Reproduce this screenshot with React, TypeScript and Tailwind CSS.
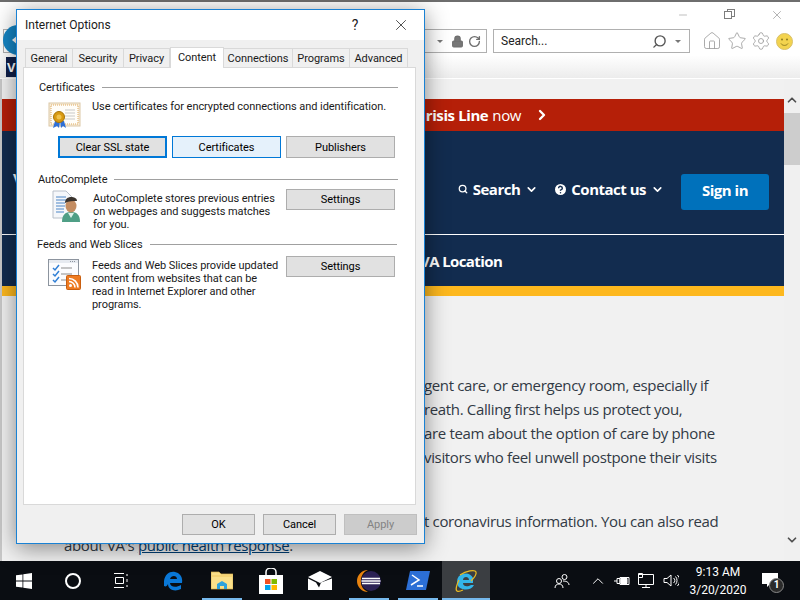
import React from "react";
import { ChevronDown, ChevronRight, ChevronUp, Search, CircleHelp, Home, Star, Settings, Lock, RotateCw, X, Minus } from "lucide-react";

const tabs = [
  { label: "General", w: "w-[48px]" },
  { label: "Security", w: "w-[52px]" },
  { label: "Privacy", w: "w-[47px]" },
  { label: "Content", w: "w-[54px]", active: true },
  { label: "Connections", w: "w-[70px]" },
  { label: "Programs", w: "w-[58px]" },
  { label: "Advanced", w: "w-[59px]" },
];

const bodyLines = [
  { text: "gent care, or emergency room, especially if", pad: "pl-[422px]", mt: "mt-[0px]" },
  { text: "reath. Calling first helps us protect you,", pad: "pl-[422px]", mt: "mt-[0px]" },
  { text: "are team about the option of care by phone", pad: "pl-[422px]", mt: "mt-[0px]" },
  { text: "visitors who feel unwell postpone their visits", pad: "pl-[422px]", mt: "mt-[0px]" },
  { text: "t coronavirus information. You can also read", pad: "pl-[422px]", mt: "mt-[40px]" },
];

function CertIcon() {
  return (
    <svg width="33" height="27" viewBox="0 0 33 27">
      <rect x="1" y="1" width="31" height="23" fill="#f7ecd8" stroke="#dcc7a6" />
      <rect x="3" y="3" width="27" height="19" fill="#fffdf8" stroke="#e0a95c" strokeDasharray="1 1" />
      <path d="M17 8h10M17 11h10M17 14h10M17 17h10" stroke="#c9c9c9" />
      <path d="M7 19l-2 7 4-2 2 2 1-7zM12 19l1 7 2-2 3 2-2-7z" fill="#2f6fd6" />
      <circle cx="11" cy="15" r="5.5" fill="#d99a12" stroke="#a87408" />
      <circle cx="11" cy="15" r="2.5" fill="#f0c24c" />
    </svg>
  );
}

function AutoCompleteIcon() {
  return (
    <svg width="29" height="33" viewBox="0 0 29 33">
      <path d="M1 1h13l6 6v21H1z" fill="#f5f7fa" stroke="#b9c0c9" />
      <path d="M4 7h10M4 10h11M4 13h9M4 16h9M4 19h8M4 22h8" stroke="#4d86c7" />
      <path d="M10 32c0-7 3-10 9-10s9 3 9 10z" fill="#4f9f86" />
      <path d="M16 23l3 5 3-5z" fill="#dff1ea" />
      <ellipse cx="19" cy="16" rx="5.5" ry="6.5" fill="#c48d62" />
      <path d="M13 13c0-4 3-6 6-6s6 1 6 4c-4 0-8 0-12 2z" fill="#3a332d" />
    </svg>
  );
}

function FeedsIcon() {
  return (
    <svg width="33" height="31" viewBox="0 0 33 31">
      <rect x="0.5" y="0.5" width="30" height="26" fill="#fbfcfe" stroke="#8c949e" />
      <path d="M1 1h29v3H1z" fill="#e6eaf0" />
      <path d="M22 2.5h6" stroke="#8c949e" strokeDasharray="1 1" />
      <path d="M5 9l2 2 4-5M5 15l2 2 4-5M5 21l2 2 4-5" fill="none" stroke="#2f7fd6" strokeWidth="1.5" />
      <path d="M13 9h11M13 15h11M13 21h7" stroke="#8d8d8d" />
      <rect x="18.5" y="16.5" width="14" height="14" rx="1" fill="#ee7b22" stroke="#c95f10" />
      <circle cx="22.5" cy="26.5" r="1.5" fill="#fff" />
      <path d="M21 22.5a6 6 0 0 1 6 6M21 19.5a9 9 0 0 1 9 9" fill="none" stroke="#fff" strokeWidth="1.6" />
    </svg>
  );
}

function DlgButton({ label, className = "", disabled = false }: { label: string; className?: string; disabled?: boolean }) {
  return (
    <button
      className={`flex items-center justify-center border ${disabled ? "border-[#bfbfbf] bg-[#cccccc] text-[#838383]" : "border-[#adadad] bg-[#e1e1e1] text-black"} ${className}`}
    >
      {label}
    </button>
  );
}

function Legend({ label, className = "" }: { label: string; className?: string }) {
  return (
    <div className={`flex items-center h-[16px] ${className}`}>
      <span>{label}</span>
      <div className="flex-1 h-px bg-[#a0a0a0] ml-[7px]" />
    </div>
  );
}

function InternetOptions() {
  return (
    <div className="absolute left-[16px] top-[9px] w-[409px] h-[535px] flex flex-col border border-[#1a82d4] bg-[#f0f0f0] text-[11px] leading-[13px] tracking-[-0.06px] text-[#1a1a1a] font-['Roboto',sans-serif] shadow-[0_4px_22px_rgba(0,0,0,0.45)]">
      <div className="h-[30px] bg-white flex items-center pl-[8px] shrink-0">
        <span className="flex-1 text-[12px] tracking-normal">Internet Options</span>
        <span className="w-[12px] text-[14px] mr-[31px] text-center">?</span>
        <X className="w-[18px] h-[18px] mr-[14px]" strokeWidth={1} />
      </div>
      <div className="flex items-end h-[27px] pl-[8px] shrink-0">
        {tabs.map((t) =>
          t.active ? (
            <div key={t.label} className={`${t.w} h-[21px] -mb-px z-10 flex items-center justify-center bg-white border border-b-0 border-[#d9d9d9] pb-[2px]`}>
              {t.label}
            </div>
          ) : (
            <div key={t.label} className={`${t.w} h-[19px] pt-[1px] flex items-center justify-center bg-[#f0f0f0] border border-b-0 border-[#d9d9d9] -ml-px first:ml-0`}>
              {t.label}
            </div>
          ),
        )}
      </div>
      <div className="ml-[6px] w-[393px] h-[438px] bg-white border border-[#d9d9d9] shrink-0">
        <Legend label="Certificates" className="mt-[11px] ml-[15px] mr-[17px]" />
        <div className="flex mt-[7px] pl-[24px]">
          <CertIcon />
          <div className="ml-[11px] -mt-[2px]">Use certificates for encrypted connections and identification.</div>
        </div>
        <div className="flex gap-[5px] mt-[7px] pl-[34px]">
          <DlgButton label="Clear SSL state" className="w-[109px] h-[22px] !border-2 !border-[#0078d7]" />
          <DlgButton label="Certificates" className="w-[109px] h-[22px] !border-[#0078d7] !bg-[#e5f1fb]" />
          <DlgButton label="Publishers" className="w-[109px] h-[22px]" />
        </div>
        <Legend label="AutoComplete" className="mt-[13px] ml-[14px] mr-[17px]" />
        <div className="flex mt-[2px] relative">
          <div className="ml-[28px] mt-[1px] w-[29px]">
            <AutoCompleteIcon />
          </div>
          <div className="ml-[12px] mt-[3px] w-[190px] whitespace-nowrap">
            AutoComplete stores previous entries
            <br />
            on webpages and suggests matches
            <br />
            for you.
          </div>
          <DlgButton label="Settings" className="ml-[3px] w-[109px] h-[21px]" />
        </div>
        <Legend label="Feeds and Web Slices" className="mt-[5px] ml-[13px] mr-[18px]" />
        <div className="flex mt-[4px]">
          <div className="ml-[24px] mt-[3px] w-[33px]">
            <FeedsIcon />
          </div>
          <div className="ml-[11px] mt-[3px] w-[190px] whitespace-nowrap">
            Feeds and Web Slices provide updated
            <br />
            content from websites that can be
            <br />
            read in Internet Explorer and other
            <br />
            programs.
          </div>
          <DlgButton label="Settings" className="ml-[4px] w-[109px] h-[21px]" />
        </div>
      </div>
      <div className="flex justify-end gap-[8px] mt-[9px] pr-[7px]">
        <DlgButton label="OK" className="w-[73px] h-[21px]" />
        <DlgButton label="Cancel" className="w-[73px] h-[21px]" />
        <DlgButton label="Apply" disabled className="w-[73px] h-[21px]" />
      </div>
    </div>
  );
}

function BrowserChrome() {
  return (
    <div className="relative h-[79px] shrink-0 bg-gradient-to-b from-white from-[70%] to-[#ececec] border-t-2 border-[#6e6e6e] border-b border-b-white">
      <div className="flex justify-end items-center h-[26px] pr-[16px] gap-[30px] text-[#7d7d7d]">
        <Minus className="w-[12px] h-[12px]" strokeWidth={1} />
        <div className="w-[15px] h-[12px] relative ml-[4px]">
          <div className="absolute left-[4px] top-0 w-[8px] h-[8px] border border-[#7d7d7d]" />
          <div className="absolute left-[1px] top-[2px] w-[8px] h-[8px] border border-[#7d7d7d] bg-white" />
        </div>
        <X className="w-[14px] h-[14px] ml-[2px]" strokeWidth={1} />
      </div>
      <div className="flex items-center h-[24px] gap-[6px] mt-[1px]">
        <div className="ml-[3px] w-[484px] h-[24px] border border-[#b0b0b0] flex items-center justify-end pr-[5px] gap-[4px] text-[#6e6e6e]">
          <div className="w-0 h-0 border-x-[3px] border-x-transparent border-t-[3px] border-t-[#777] mr-[4px]" />
          <Lock className="w-[13px] h-[13px] fill-[#777]" strokeWidth={2} />
          <RotateCw className="w-[13px] h-[13px]" strokeWidth={2.5} />
        </div>
        <div className="w-[197px] h-[24px] border border-[#b0b0b0] flex items-center pl-[7px] text-[12px] font-['Roboto',sans-serif] text-[#222]">
          <span className="flex-1">Search...</span>
          <Search className="w-[15px] h-[15px] text-[#555] -scale-x-100 mr-[8px]" strokeWidth={2.2} />
          <div className="w-0 h-0 border-x-[3px] border-x-transparent border-t-[3px] border-t-[#777] mr-[8px]" />
        </div>
        <div className="flex items-center ml-[6px] gap-[5px] text-[#9a9a9a]">
          <Home className="w-[20px] h-[20px]" strokeWidth={1} />
          <Star className="w-[20px] h-[20px]" strokeWidth={1} />
          <Settings className="w-[20px] h-[20px] -ml-px" strokeWidth={1} />
          <svg width="17" height="17" viewBox="0 0 17 17">
            <circle cx="8.5" cy="8.5" r="8" fill="#f3d34e" stroke="#d8c06a" />
            <circle cx="6" cy="6.5" r="1" fill="#8d7a20" />
            <circle cx="11" cy="6.5" r="1" fill="#8d7a20" />
            <path d="M5 10.5c1.5 2.5 5.5 2.5 7 0" fill="none" stroke="#8d7a20" />
          </svg>
        </div>
      </div>
    </div>
  );
}

function PageContent() {
  return (
    <div className="flex flex-1 min-h-0 bg-[#f1f1f1] border-l-2 border-[#c8c8c8]">
      <div className="w-[782px] font-['Open_Sans',sans-serif] pt-[20px]">
        <div className="h-[32px] bg-[#b51f08] flex items-center justify-end pr-[234px] text-white text-[15px] tracking-[-0.4px]">
          <span className="font-bold">risis Line</span>
          <span className="ml-[4px]">now</span>
          <ChevronRight className="w-[16px] h-[16px] ml-[13px]" strokeWidth={3.5} />
        </div>
        <div className="bg-[#122c4f] text-white font-bold text-[15px] tracking-[-0.5px]">
          <div className="h-[104px] flex items-center border-b border-white pt-[18px]">
            <span className="ml-[11px] text-[15px] -mt-[26px]">V</span>
            <div className="ml-auto flex items-center">
              <Search className="w-[10px] h-[10px] -mt-[5px]" strokeWidth={3} />
              <span className="ml-[5px] -mt-[5px]">Search</span>
              <ChevronDown className="w-[13px] h-[13px] ml-[5px] -mt-[5px]" strokeWidth={3} />
              <CircleHelp className="w-[15px] h-[15px] ml-[15px] -mt-[5px] fill-white text-[#122c4f]" strokeWidth={2.4} />
              <span className="ml-[3px] -mt-[5px]">Contact us</span>
              <ChevronDown className="w-[13px] h-[13px] ml-[5px] mr-[17px] -mt-[5px]" strokeWidth={3} />
              <button className="w-[88px] h-[36px] mr-[15px] pb-[2px] rounded-[3px] bg-[#0071bb] text-white font-bold">Sign in</button>
            </div>
          </div>
          <div className="h-[51px] flex items-center pl-[418px] pt-[2px] tracking-[-0.6px]">
            <span>VA Location</span>
          </div>
        </div>
        <div className="h-[10px] bg-[#fdb81e]" />
        <div className="pt-[77px] text-[15px] leading-[24px] tracking-[-0.35px] text-[#323a45] whitespace-nowrap">
          {bodyLines.map((l) => (
            <div key={l.text} className={`${l.pad} ${l.mt}`}>
              {l.text}
            </div>
          ))}
          <div className="pl-[62px]">
            about VA's <span className="text-[#003e73] underline">public health response</span>.
          </div>
        </div>
      </div>
      <div className="w-[16px] ml-auto flex flex-col items-center bg-[#f0f0f0] text-[#505050]">
        <div className="h-[34px] pt-[14px]">
          <ChevronUp className="w-[14px] h-[14px]" strokeWidth={3} />
        </div>
        <div className="w-full h-[52px] bg-[#cdcdcd]" />
        <div className="mt-auto mb-[14px]">
          <ChevronDown className="w-[14px] h-[14px]" strokeWidth={3} />
        </div>
      </div>
    </div>
  );
}

function Underlined({ children, on, className = "w-[49px]" }: { children: React.ReactNode; on?: boolean; className?: string }) {
  return (
    <div className={`${className} h-full flex items-center justify-center relative`}>
      {children}
      {on && <div className="absolute bottom-0 left-[5px] right-[4px] h-[2px] bg-[#76b9ed]" />}
    </div>
  );
}

function Taskbar() {
  return (
    <div className="h-[39px] shrink-0 bg-[#0a0d12] flex items-center text-white font-['Roboto',sans-serif]">
      <Underlined className="w-[47px]">
        <svg width="16" height="16" viewBox="0 0 16 16" fill="#fff">
          <path d="M0 2.3l6.5-.9v6.2H0zM7.3 1.3L16 0v7.6H7.3zM0 8.4h6.5v6.2L0 13.7zM7.3 8.4H16V16l-8.7-1.3z" />
        </svg>
      </Underlined>
      <Underlined className="w-[51px]">
        <div className="w-[16px] h-[16px] rounded-full border-2 border-white" />
      </Underlined>
      <Underlined className="w-[46px]">
        <svg width="17" height="15" viewBox="0 0 17 15" fill="none" stroke="#fff">
          <path d="M1 .5h10M1 14.5h10M2.5 4.5h8v6h-8zM14 1v2M14 6v3M14 12v2" />
        </svg>
      </Underlined>
      <div className="w-[4px]" />
      <Underlined>
        <svg width="20" height="20" viewBox="0 0 20 20">
          <path d="M1 10C2 3 7 0 12 1c5 1 8 5 7 11H7c0 4 6 5 11 2v4c-6 3-13 1-13-5-1 2-2 3-4 2zm6-2h7c0-4-6-4-7 0z" fill="#0a78d7" />
        </svg>
      </Underlined>
      <Underlined on>
        <svg width="22" height="19" viewBox="0 0 22 19">
          <path d="M0 1h8l2 2h12v15H0z" fill="#fbe08a" stroke="#d9b04a" strokeWidth="0.7" />
          <path d="M1 5h20" stroke="#f0c75e" />
          <path d="M6 18v-5l5-3 5 3v5h-3v-3H9v3z" fill="#2ea3dd" />
        </svg>
      </Underlined>
      <Underlined>
        <svg width="24" height="26" viewBox="0 0 24 26">
          <path d="M0 7h24v19H0z" fill="#fff" />
          <path d="M7 8V4a5 4 0 0 1 10 0v4" fill="none" stroke="#fff" strokeWidth="1.5" />
          <rect x="6" y="11" width="5.5" height="5" fill="#f25022" />
          <rect x="12.5" y="11" width="5.5" height="5" fill="#7fba00" />
          <rect x="6" y="17" width="5.5" height="5" fill="#00a4ef" />
          <rect x="12.5" y="17" width="5.5" height="5" fill="#ffb900" />
        </svg>
      </Underlined>
      <Underlined>
        <svg width="24" height="19" viewBox="0 0 24 19">
          <path d="M0 6L12 0l12 6-12 6z" fill="#fff" />
          <path d="M0 7.500l8 4 3 5 2-5 11-4V19H0z" fill="#fff" />
        </svg>
      </Underlined>
      <Underlined on>
        <svg width="24" height="24" viewBox="0 0 24 24">
          <path d="M11 1a11 11 0 0 0 0 22 12 12 0 0 1 0-22z" fill="#e8830f" />
          <circle cx="14" cy="12" r="10" fill="#2c2255" />
          <path d="M5 9.5h18M4.500 12h19M5 14.500h18" stroke="#fff" strokeWidth="1.300" />
        </svg>
      </Underlined>
      <Underlined on>
        <svg width="24" height="19" viewBox="0 0 24 19">
          <path d="M4 0h20l-4 19H0z" fill="#2c6fd6" />
          <path d="M6 4l7 5-8 5" fill="none" stroke="#fff" strokeWidth="1.500" />
          <path d="M11 15h6" stroke="#fff" strokeWidth="1.500" />
        </svg>
      </Underlined>
      <div className="w-[48px] h-full bg-[#3b3e42] flex items-center justify-center relative">
        <svg width="24" height="24" viewBox="0 0 24 24">
          <path d="M3 13a8.500 8.500 0 0 1 16-4v5H9c0 4 5 4 8 2h3c-3 7-17 6-17-3zm6-2h6c0-4-6-4-6 0z" fill="#33b5e9" />
          <path d="M6 6c6-4 15-6 16-3 1 3-3 7-5 9M5 11C3 15 1 21 3 22c1.500 1 4 0 6-1" fill="none" stroke="#e8b923" strokeWidth="1.300" />
        </svg>
        <div className="absolute bottom-0 inset-x-0 h-[2px] bg-[#76b9ed]" />
      </div>
      <div className="ml-[64px] flex items-center text-white">
        <svg width="16" height="16" viewBox="0 0 16 16" fill="none" stroke="#fff">
          <circle cx="10.500" cy="4" r="2.500" />
          <circle cx="5" cy="8" r="2.500" />
          <path d="M1 15c0-3 2-4 4-4s4 1 4 4M9 8c3 0 6 1 6 4" />
        </svg>
        <ChevronUp className="w-[18px] h-[18px] ml-[19px]" strokeWidth={1.300} />
        <svg width="16" height="12" viewBox="0 0 16 12" fill="none" stroke="#fff" className="ml-[7px]">
          <path d="M0 6h3M3 3.500h3v5H3zM6 2.500h9v7H6z" />
          <path d="M7 3.500h6v5H7z" fill="#fff" />
        </svg>
        <svg width="16" height="15" viewBox="0 0 16 15" fill="none" stroke="#fff" className="ml-[8px]">
          <path d="M.5 1.500h15v10H.5zM8 11.500v3M4 14.500h8M.5.500h4v4h-4z" />
        </svg>
        <svg width="16" height="13" viewBox="0 0 16 13" fill="none" stroke="#fff" className="ml-[9px]">
          <path d="M1 4.500h3L8 1v11L4 8.500H1zM10.500 4a3 3 0 0 1 0 5M12.500 2.500a6 6 0 0 1 0 8M14.500 1a8 8 0 0 1 0 11" />
        </svg>
      </div>
      <div className="ml-[4px] w-[70px] flex flex-col items-center text-[12px] leading-[18px]">
        <span>9:13 AM</span>
        <span>3/20/2020</span>
      </div>
      <div className="relative ml-[9px] w-[18px] h-[16px]">
        <svg width="16" height="14" viewBox="0 0 16 14" fill="#fff">
          <path d="M0 0h16v11H8l-3 3v-3H0z" />
        </svg>
        <div className="absolute left-[7px] top-[5px] w-[15px] h-[15px] rounded-full border border-[#888] bg-[#2a2a2a] flex items-center justify-center text-[10px] font-bold leading-none">
          1
        </div>
      </div>
    </div>
  );
}

export default function App() {
  return (
    <div className="relative w-[800px] h-[600px] overflow-hidden flex flex-col bg-white font-['Noto_Sans',sans-serif]">
      <BrowserChrome />
      <PageContent />
      <Taskbar />
      <svg width="14" height="30" viewBox="0 0 14 30" className="absolute left-[3px] top-[25px]">
        <circle cx="15" cy="15" r="15" fill="#1585c4" />
        <path d="M9 15l6-5v10z" fill="#fff" />
      </svg>
      <div className="absolute left-[6px] top-[57px] w-[11px] h-[20px] bg-[#11204a] text-white text-[13px] font-bold pl-[1px] leading-[20px]">V</div>
      <InternetOptions />
    </div>
  );
}
